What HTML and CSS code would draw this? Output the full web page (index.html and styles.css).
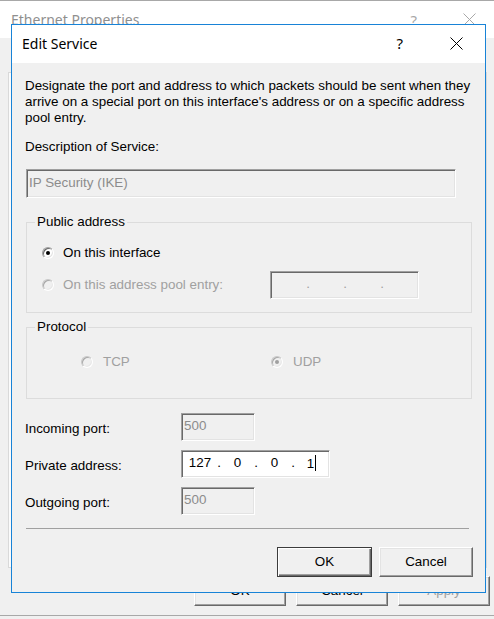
FILE: index.html
```html
<!DOCTYPE html>
<html lang="en">
<head>
<meta charset="utf-8">
<title>Edit Service</title>
<link rel="stylesheet" href="styles.css">
</head>
<body>
<div class="bgwin">
  <div class="bg-title">
    <span class="bg-title-text">Ethernet Properties</span>
    <span class="bg-help">?</span>
    <svg class="bg-close" width="13" height="13" viewBox="0 0 13 13"><path d="M0.5 0.5 L12.5 12.5 M12.5 0.5 L0.5 12.5" stroke="#a8a8a8" stroke-width="1" fill="none"/></svg>
  </div>
  <div class="bg-body">
    <div class="bg-panel"></div>
    <div class="bg-buttons">
      <div class="btn bg-btn">OK</div>
      <div class="btn bg-btn">Cancel</div>
      <div class="btn bg-btn bg-btn-disabled">Apply</div>
    </div>
  </div>
</div>

<div class="dialog">
  <div class="dlg-title">
    <span class="dlg-title-text">Edit Service</span>
    <span class="dlg-help">?</span>
    <svg class="dlg-close" width="13" height="13" viewBox="0 0 13 13"><path d="M0.5 0.5 L12.5 12.5 M12.5 0.5 L0.5 12.5" stroke="#000" stroke-width="1" fill="none"/></svg>
  </div>
  <div class="dlg-body">
    <p class="desc">Designate the port and address to which packets should be sent when they<br>arrive on a special port on this interface's address or on a specific address<br>pool entry.</p>
    <div class="label-desc">Description of Service:</div>
    <div class="tb tb-disabled tb-desc">IP Security (IKE)</div>

    <fieldset class="group group-public">
      <legend>Public address</legend>
      <div class="radio-row">
        <span class="radio checked"></span>
        <span class="radio-label">On this interface</span>
      </div>
      <div class="radio-row row-pool">
        <div class="pool-choice">
          <span class="radio disabled"></span>
          <span class="radio-label label-disabled">On this address pool entry:</span>
        </div>
        <div class="tb tb-disabled ip">
          <span class="seg"></span><span class="dot">.</span><span class="seg"></span><span class="dot">.</span><span class="seg"></span><span class="dot">.</span><span class="seg"></span>
        </div>
      </div>
    </fieldset>

    <fieldset class="group group-protocol">
      <legend>Protocol</legend>
      <div class="proto-row">
        <div class="proto-item">
          <span class="radio disabled"></span>
          <span class="radio-label label-disabled proto-label">TCP</span>
        </div>
        <div class="proto-item">
          <span class="radio disabled checked"></span>
          <span class="radio-label label-disabled proto-label">UDP</span>
        </div>
      </div>
    </fieldset>

    <div class="field-row row-incoming">
      <span class="field-label">Incoming port:</span>
      <div class="tb tb-disabled tb-port">500</div>
    </div>
    <div class="field-row row-private">
      <span class="field-label">Private address:</span>
      <div class="tb tb-active ip">
        <span class="seg">127</span><span class="dot">.</span><span class="seg">0</span><span class="dot">.</span><span class="seg">0</span><span class="dot">.</span><span class="seg">1<span class="caret"></span></span>
      </div>
    </div>
    <div class="field-row row-outgoing">
      <span class="field-label">Outgoing port:</span>
      <div class="tb tb-disabled tb-port">500</div>
    </div>

    <div class="separator"></div>

    <div class="dlg-buttons">
      <div class="btn btn-default">OK</div>
      <div class="btn btn-cancel">Cancel</div>
    </div>
  </div>
</div>
</body>
</html>
```

FILE: styles.css
```css
* { box-sizing: border-box; }
html, body { margin: 0; padding: 0; }
body {
  width: 494px;
  height: 619px;
  overflow: hidden;
  position: relative;
  background: #f0f0f0;
  font-family: "Liberation Sans", Arial, sans-serif;
  font-size: 13.4px;
  color: #000;
}

/* background window */
.bgwin {
  height: 616px;
  border-top: 1px solid #a8a8a8;
  border-bottom: 1px solid #a8a8a8;
  display: flex;
  flex-direction: column;
}
.bg-title {
  height: 37px;
  flex: none;
  background: #fff;
  display: flex;
  align-items: center;
  padding-left: 11px;
  font-family: "Noto Sans", sans-serif;
  font-size: 14px;
  color: #8f8f8f;
}
.bg-title-text { flex: 1; }
.bg-help { margin-right: 46px; font-size: 15px; color: #a8a8a8; }
.bg-close { margin-right: 18px; }
.bg-body {
  flex: 1;
  padding: 34px 7px 0 8px;
  display: flex;
  flex-direction: column;
}
.bg-panel {
  height: 496px;
  border: 1px solid #d9d9d9;
  background: #fbfbfb;
}
.bg-buttons {
  margin-top: 8px;
  margin-right: -3px;
  display: flex;
  justify-content: flex-end;
  gap: 10px;
}
.bg-btn { width: 92px; }
.bg-btn-disabled { background: #dcdcdc; color: #a0a0a0; }

/* buttons */
.btn {
  height: 30px;
  display: flex;
  align-items: center;
  justify-content: center;
  background: #f0f0f0;
  border: 1px solid;
  border-color: #fff #696969 #696969 #fff;
  box-shadow: inset -1px -1px #a0a0a0, inset 1px 1px #e3e3e3;
  font-size: 13.4px;
  padding-bottom: 1px;
}
.btn-default {
  width: 95px;
  border: 1px solid #3c3c3c;
  box-shadow: inset 1px 1px #fff, inset -1px -1px #696969, inset -2px -2px #a0a0a0;
}
.btn-cancel { width: 94px; }

/* dialog */
.dialog {
  position: absolute;
  left: 11px;
  top: 24px;
  width: 475px;
  height: 569px;
  border: 1px solid #1883d7;
  display: flex;
  flex-direction: column;
  background: #f0f0f0;
}
.dlg-title {
  height: 38px;
  flex: none;
  background: #fff;
  display: flex;
  align-items: center;
  padding-left: 10px;
  padding-bottom: 2px;
  font-family: "Noto Sans", sans-serif;
  font-size: 14px;
}
.dlg-title-text { flex: 1; }
.dlg-help { margin-right: 47px; font-size: 15px; }
.dlg-close { margin-right: 22px; }
.dlg-body {
  flex: 1;
  padding: 15px 13px 0 13px;
  display: flex;
  flex-direction: column;
}
.desc { margin: 0; line-height: 16px; }
.label-desc { margin-top: 13px; line-height: 16px; }

/* text boxes */
.tb {
  height: 28px;
  border: 1px solid;
  border-color: #a0a0a0 #fff #fff #a0a0a0;
  box-shadow: inset 1px 1px #696969, inset -1px -1px #e3e3e3;
  display: flex;
  align-items: center;
  padding: 0 0 3px 2px;
}
.tb-disabled { background: #f0f0f0; color: #8c8c8c; }
.tb-active { background: #fff; color: #000; }
.tb-desc { margin: 14px 0 0 1px; width: 430px; height: 29px; }
.tb-port { width: 74px; }

/* group boxes */
.group {
  margin: 16px 0 0 1px;
  width: 446px;
  border: 1px solid #dcdcdc;
  padding: 15px 8px 13px 8px;
  min-width: 0;
}
.group legend {
  padding: 0 2px;
  line-height: 16px;
  font-size: 13.4px;
}
.group-protocol { margin-top: 6px; padding: 19px 8px 28px 8px; }

.radio-row {
  display: flex;
  align-items: center;
  height: 16px;
  padding-left: 7px;
}
.row-pool { margin-top: 10px; height: 28px; }
.pool-choice { width: 228px; display: flex; align-items: center; }
.radio {
  position: relative;
  width: 12px;
  height: 12px;
  flex: none;
  border-radius: 50%;
  border: 1px solid;
  border-color: #a0a0a0 #fff #fff #a0a0a0;
  box-shadow: inset 1px 1px #696969, inset -1px -1px #e3e3e3;
  background: #fff;
}
.radio.checked::after {
  content: "";
  position: absolute;
  left: 3px;
  top: 3px;
  width: 4px;
  height: 4px;
  border-radius: 50%;
  background: #000;
}
.radio.disabled { background: #f0f0f0; border-color: #c8c8c8 #fff #fff #c8c8c8; box-shadow: inset 1px 1px #a8a8a8, inset -1px -1px #e8e8e8; }
.radio.disabled.checked::after { background: #a0a0a0; }
.radio-label { margin-left: 9px; line-height: 16px; }
.label-disabled { color: #a0a0a0; }

.ip {
  width: 149px;
  display: grid;
  grid-template-columns: 34px 4px 33px 4px 33px 4px 33px;
  padding-left: 1px;
}
.seg { text-align: center; }
.dot { text-align: center; }
.tb-disabled .dot { color: #a0a0a0; }
.caret {
  display: inline-block;
  width: 1px;
  height: 16px;
  background: #000;
  margin-left: 1px;
  vertical-align: -3px;
}

.proto-row {
  display: grid;
  grid-template-columns: 190px auto;
  padding-left: 46px;
  height: 16px;
}
.proto-item { display: flex; align-items: center; }
.proto-label { margin-left: 10px; }

/* field rows */
.field-row { display: flex; align-items: center; }
.field-label { width: 156px; padding-top: 3px; }
.row-incoming { margin-top: 14px; }
.row-private { margin-top: 9px; }
.row-outgoing { margin-top: 9px; }

.separator {
  margin: 13px 0 0 1px;
  width: 443px;
  height: 1px;
  background: #a0a0a0;
  flex: none;
}
.dlg-buttons {
  margin-top: 18px;
  margin-right: -1px;
  display: flex;
  justify-content: flex-end;
  gap: 7px;
}
```
